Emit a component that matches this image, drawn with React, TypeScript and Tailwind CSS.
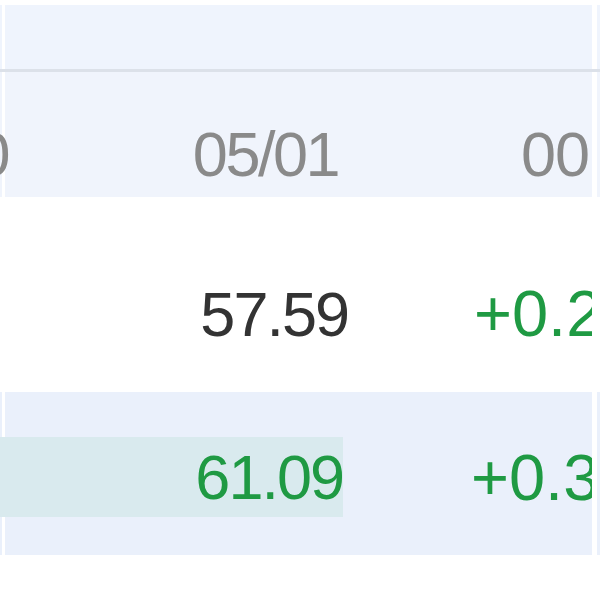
const font = { fontFamily: '"Liberation Sans", Arial, sans-serif' };

function Row({
  bg,
  height,
  children,
}: {
  bg: string;
  height: string;
  children: React.ReactNode;
}) {
  return (
    <div className={`flex bg-white ${height}`}>
      <div className={`w-[2px] shrink-0 ${bg}`} />
      <div className="w-[3px] shrink-0" />
      <div className={`w-[587px] shrink-0 ${bg}`}>{children}</div>
      <div className="w-[5px] shrink-0 bg-white relative z-10" />
      <div className={`flex-1 relative z-10 ${bg}`} />
    </div>
  );
}

export default function App() {
  return (
    <div
      className="w-[600px] h-[600px] overflow-hidden bg-white text-[63px] leading-none tracking-[-2px]"
      style={font}
    >
      <div className="h-[5px]" />
      <Row bg="bg-[#eff4fd]" height="h-[64px]">
        <div />
      </Row>
      <div className="h-[3px] bg-[#dce1e9]" />
      <Row bg="bg-[#f0f4fc]" height="h-[125px]">
        <div className="flex items-end h-full pb-[11px] text-[#8a8a8a] whitespace-nowrap tracking-[-2.5px]">
          <span className="w-[200px] shrink-0 ml-[-197px] text-right">04/30</span>
          <span className="w-[330px] shrink-0 text-right">05/01</span>
          <span className="shrink-0 ml-[183px] tracking-[-1px]">00:00</span>
        </div>
      </Row>
      <Row bg="bg-white" height="h-[195px]">
        <div className="flex items-end h-full pb-[46px] whitespace-nowrap">
          <span className="w-[343px] shrink-0 text-right text-[#333333]">57.59</span>
          <span className="shrink-0 ml-[126px] text-[#1f9a43] text-[65px] tracking-normal">+0.21%</span>
        </div>
      </Row>
      <Row bg="bg-[#eaf0fb]" height="h-[163px]">
        <div className="flex items-center h-full pt-[7px] whitespace-nowrap">
          <div className="w-[343px] shrink-0 ml-[-5px] h-[80px] bg-[#d9eaee] flex items-center justify-end">
            <span className="text-[#1f9a43]">61.09</span>
          </div>
          <span className="shrink-0 ml-[128px] text-[#1f9a43] text-[65px] tracking-normal">+0.35%</span>
        </div>
      </Row>
    </div>
  );
}
